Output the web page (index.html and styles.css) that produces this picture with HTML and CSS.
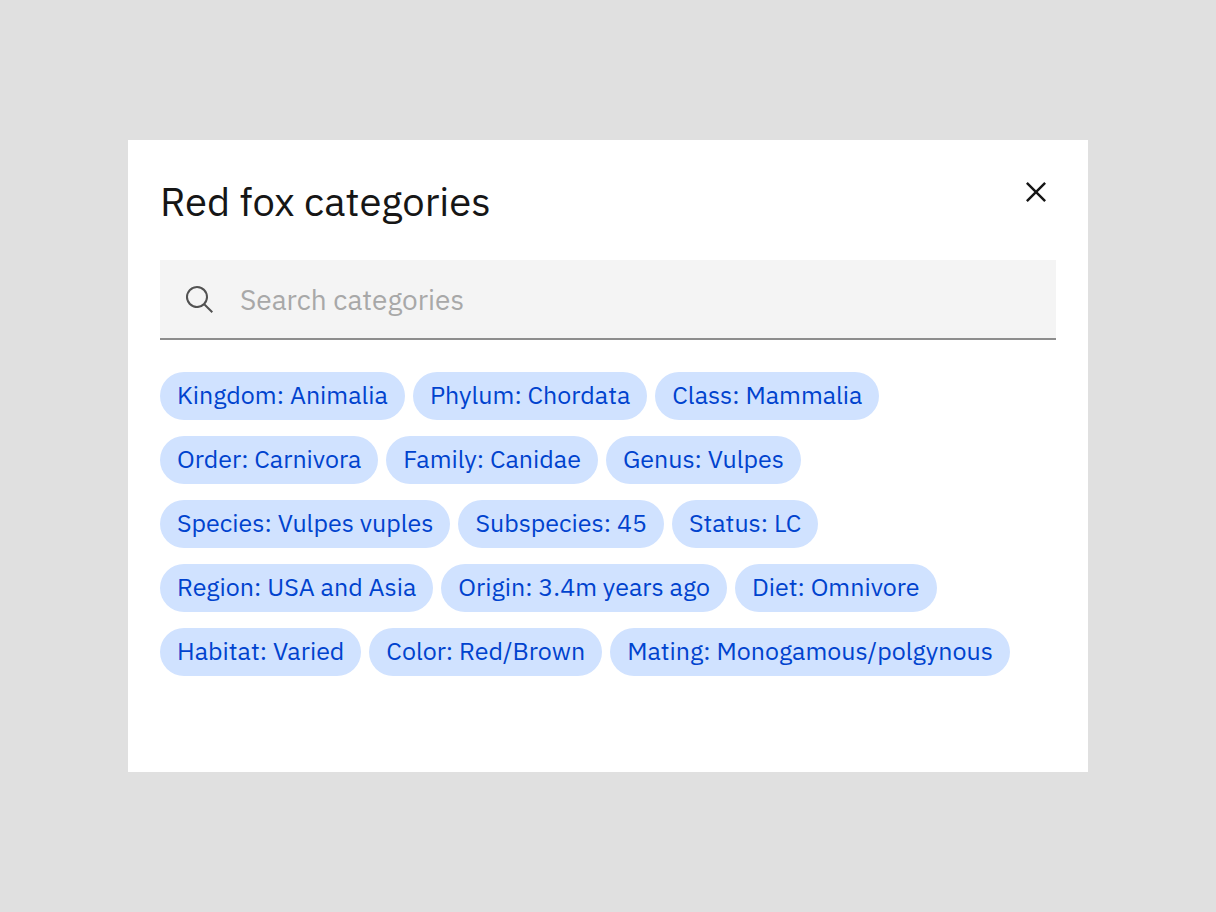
FILE: index.html
```html
<!DOCTYPE html>
<html lang="en">
<head>
<meta charset="utf-8">
<title>Red fox categories</title>
<link rel="stylesheet" href="styles.css">
</head>
<body>
<main class="modal" role="dialog" aria-labelledby="modal-title">
  <header class="modal-header">
    <h1 class="modal-title" id="modal-title">Red fox categories</h1>
    <button class="close" type="button" aria-label="Close">
      <svg viewBox="0 0 32 32" width="40" height="40" aria-hidden="true"><path d="M24 9.4 22.6 8 16 14.6 9.4 8 8 9.4 14.6 16 8 22.6 9.4 24 16 17.4 22.6 24 24 22.6 17.4 16z"/></svg>
    </button>
  </header>
  <div class="search">
    <svg class="search-icon" viewBox="0 0 32 32" width="32" height="32" aria-hidden="true"><path d="M29 27.586 21.448 20.034A11.018 11.018 0 1 0 20.034 21.448L27.586 29zM4 13a9 9 0 1 1 9 9 9.01 9.01 0 0 1-9-9z"/></svg>
    <input class="search-input" type="text" placeholder="Search categories" aria-label="Search categories">
  </div>
  <div class="tags">
    <div class="tag-row"><span class="tag">Kingdom: Animalia</span><span class="tag">Phylum: Chordata</span><span class="tag">Class: Mammalia</span></div>
    <div class="tag-row"><span class="tag">Order: Carnivora</span><span class="tag">Family: Canidae</span><span class="tag">Genus: Vulpes</span></div>
    <div class="tag-row"><span class="tag">Species: Vulpes vuples</span><span class="tag">Subspecies: 45</span><span class="tag">Status: LC</span></div>
    <div class="tag-row"><span class="tag">Region: USA and Asia</span><span class="tag">Origin: 3.4m years ago</span><span class="tag">Diet: Omnivore</span></div>
    <div class="tag-row"><span class="tag">Habitat: Varied</span><span class="tag">Color: Red/Brown</span><span class="tag">Mating: Monogamous/polgynous</span></div>
  </div>
</main>
</body>
</html>
```
FILE: styles.css
```css
* {
  box-sizing: border-box;
}

body {
  margin: 0;
  min-height: 100vh;
  padding: 32px 128px;
  display: flex;
  align-items: center;
  background: #e0e0e0;
  color: #161616;
  font-family: "IBM Plex Sans", Roboto, "Liberation Sans", sans-serif;
}

.modal {
  flex: 1;
  padding: 32px 32px 96px;
  background: #fff;
}

.modal-header {
  display: flex;
  justify-content: space-between;
  align-items: flex-start;
}

.modal-title {
  margin: 0;
  padding: 4px 0 34px;
  font-size: 40px;
  font-weight: 400;
  line-height: 50px;
}

.close {
  display: flex;
  padding: 0;
  border: 0;
  background: none;
  fill: #161616;
}

.search {
  display: flex;
  align-items: center;
  gap: 24px;
  height: 80px;
  padding-left: 24px;
  background: #f4f4f4;
  box-shadow: inset 0 -2px #8d8d8d;
}

.search-icon {
  flex: none;
  fill: #525252;
}

.search-input {
  flex: 1;
  min-width: 0;
  height: 100%;
  padding: 0 0 2px;
  border: 0;
  background: none;
  color: #161616;
  font: 28px/36px "IBM Plex Sans", Roboto, "Liberation Sans", sans-serif;
}

.search-input::placeholder {
  color: #a8a8a8;
  opacity: 1;
}

.tags {
  display: flex;
  flex-direction: column;
  gap: 16px;
  padding-top: 32px;
}

.tag-row {
  display: flex;
  flex-wrap: wrap;
  gap: 8px;
}

.tag {
  padding: 0 17px 2px;
  border-radius: 24px;
  background: #d0e2ff;
  color: #0043ce;
  font-size: 25px;
  line-height: 46px;
  white-space: nowrap;
}
```
